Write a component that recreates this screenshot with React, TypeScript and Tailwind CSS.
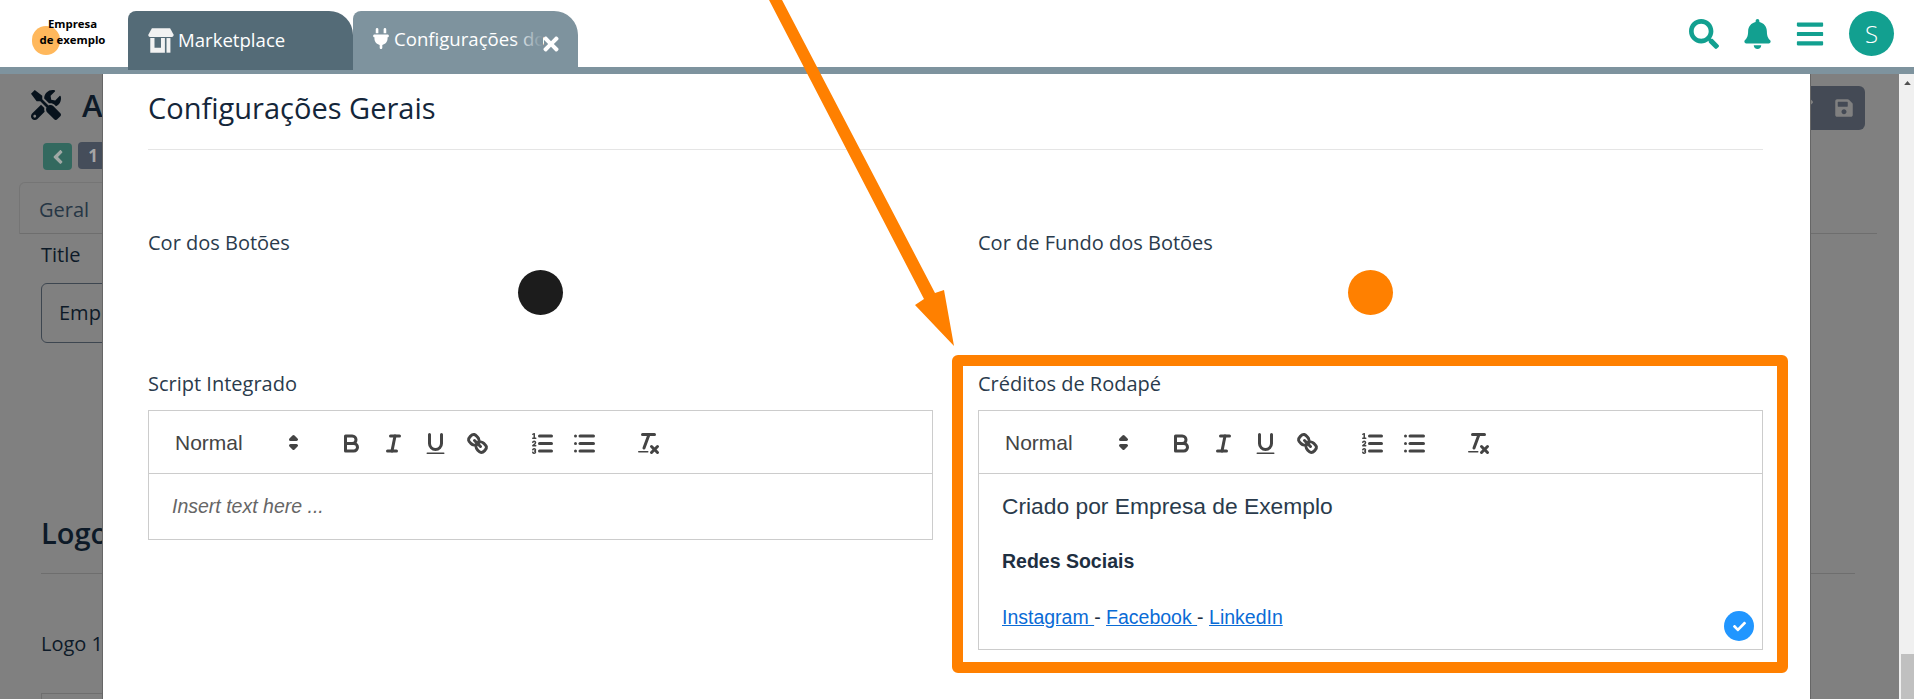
import React from "react";
import { FaAngleLeft, FaBars, FaBell, FaCheck, FaEdit, FaSave, FaSearch, FaTimes, FaTools } from "react-icons/fa";
import { FaPlug } from "react-icons/fa6";

const Stroke = ({ children }: { children: React.ReactNode }) => (
  <svg viewBox="0 0 18 18" className="w-[27px] h-[27px]" fill="none" stroke="#444" strokeWidth={2} strokeLinecap="round" strokeLinejoin="round">
    {children}
  </svg>
);

const ToolButton = ({ children }: { children: React.ReactNode }) => (
  <span className="flex items-center justify-center w-[42px] h-[36px]">{children}</span>
);

const Toolbar = () => (
  <div className="flex items-center h-[63px] px-[12px] pt-[2px] border-b border-[#ccc]">
    <div className="relative w-[147px] mr-[22.5px] pl-[14px] font-['Liberation_Sans',sans-serif] text-[21px] leading-[36px] text-[#444]">
      Normal
      <span className="absolute right-[1px] top-[4px]">
        <svg viewBox="0 0 18 18" className="w-[27px] h-[27px]" fill="#444" stroke="#444" strokeWidth={2} strokeLinejoin="round">
          <polygon points="7 11 9 13 11 11 7 11" />
          <polygon points="7 7 9 5 11 7 7 7" />
        </svg>
      </span>
    </div>
    <div className="flex mr-[22.5px]">
      <ToolButton>
        <Stroke>
          <path d="M5,4H9.5A2.5,2.5,0,0,1,12,6.5v0A2.5,2.5,0,0,1,9.5,9H5A0,0,0,0,1,5,9V4A0,0,0,0,1,5,4Z" />
          <path d="M5,9h5.5A2.5,2.5,0,0,1,13,11.5v0A2.5,2.5,0,0,1,10.5,14H5a0,0,0,0,1,0,0V9A0,0,0,0,1,5,9Z" />
        </Stroke>
      </ToolButton>
      <ToolButton>
        <Stroke>
          <line x1="7" x2="13" y1="4" y2="4" />
          <line x1="5" x2="11" y1="14" y2="14" />
          <line x1="8" x2="10" y1="14" y2="4" />
        </Stroke>
      </ToolButton>
      <ToolButton>
        <Stroke>
          <path d="M5,3V9a4.012,4.012,0,0,0,4,4H9a4.012,4.012,0,0,0,4-4V3" />
          <rect x="3" y="15" width="12" height="1" rx="0.5" ry="0.5" fill="#444" strokeWidth={0} />
        </Stroke>
      </ToolButton>
      <ToolButton>
        <Stroke>
          <line x1="7" x2="11" y1="7" y2="11" />
          <path d="M8.9,4.577a3.476,3.476,0,0,1,.36,4.679A3.476,3.476,0,0,1,4.577,8.9C3.185,7.5,2.035,6.4,4.217,4.217S7.5,3.185,8.9,4.577Z" />
          <path d="M13.423,9.1a3.476,3.476,0,0,0-4.679-.36,3.476,3.476,0,0,0,.36,4.679c1.392,1.392,2.5,2.542,4.679.36S14.815,10.5,13.423,9.1Z" />
        </Stroke>
      </ToolButton>
    </div>
    <div className="flex mr-[22.5px]">
      <ToolButton>
        <Stroke>
          <line x1="7" x2="15" y1="4" y2="4" />
          <line x1="7" x2="15" y1="9" y2="9" />
          <line x1="7" x2="15" y1="14" y2="14" />
          <line x1="2.5" x2="4.5" y1="5.5" y2="5.5" strokeWidth={1} />
          <path d="M3.5,6A0.5,0.5,0,0,1,3,5.5V3.085l-0.276.138A0.5,0.5,0,0,1,2.053,3c-0.124-.247-0.023-0.324.224-0.447l1-.5A0.5,0.5,0,0,1,4,2.5v3A0.5,0.5,0,0,1,3.5,6Z" fill="#444" strokeWidth={0} />
          <path d="M4.5,10.5h-2c0-.234,1.85-1.076,1.85-2.234A0.959,0.959,0,0,0,2.5,8.156" strokeWidth={1} />
          <path d="M2.5,14.846a0.959,0.959,0,0,0,1.85-.109A0.7,0.7,0,0,0,3.75,14a0.688,0.688,0,0,0,.6-0.736,0.959,0.959,0,0,0-1.85-.109" strokeWidth={1} />
        </Stroke>
      </ToolButton>
      <ToolButton>
        <Stroke>
          <line x1="6" x2="15" y1="4" y2="4" />
          <line x1="6" x2="15" y1="9" y2="9" />
          <line x1="6" x2="15" y1="14" y2="14" />
          <line x1="3" x2="3" y1="4" y2="4" />
          <line x1="3" x2="3" y1="9" y2="9" />
          <line x1="3" x2="3" y1="14" y2="14" />
        </Stroke>
      </ToolButton>
    </div>
    <ToolButton>
      <Stroke>
        <line x1="5" x2="13" y1="3" y2="3" />
        <line x1="6" x2="9.35" y1="12" y2="3" />
        <line x1="11" x2="15" y1="11" y2="15" />
        <line x1="15" x2="11" y1="11" y2="15" />
        <rect x="2" y="14" width="7" height="1" rx="0.5" ry="0.5" fill="#444" strokeWidth={0} />
      </Stroke>
    </ToolButton>
  </div>
);

// shop glyph of the first tab: awning, open window and door post
const ShopIcon = () => (
  <svg viewBox="0 0 80 75" className="w-[26px] h-[25px]" fill="#f2f2f2">
    <path d="M12 0H68L79 20Q79 27 70 27H10Q0 27 1 20Z" />
    <path d="M7 30H20V60H40V30H52V75H7Z" />
    <rect x="57" y="30" width="12" height="45" />
  </svg>
);

const Background = () => (
  <div className="text-[#0d1a28]">
    <div className="flex items-center justify-between h-[44px] mt-[12px] pl-[31px] pr-[34px]">
      <div className="flex items-center gap-[21px] mb-[6px]">
        <FaTools className="w-[30px] h-[30px] text-[#07121c]" />
        <span className="text-[31px] font-semibold leading-[40px]">Aplicativo</span>
      </div>
      <div className="flex items-center justify-end gap-[21px] w-[120px] h-[44px] pr-[11px] rounded-[6px] bg-[#444a55] text-[#808080]">
        <FaEdit className="w-[20px] h-[20px]" />
        <FaSave className="w-[20px] h-[20px]" />
      </div>
    </div>
    <div className="flex items-start gap-[6px] mt-[12px] ml-[43px]">
      <span className="flex items-center justify-center w-[29px] h-[27px] mt-[1px] rounded-[4px] bg-[#33695f]">
        <FaAngleLeft className="w-[22px] h-[22px] text-[#a0a8a5]" />
      </span>
      <span className="flex items-center justify-center w-[30px] h-[27px] rounded-[4px] bg-[#454d5a] text-[17px] font-bold text-[#a5a5a5]">
        1
      </span>
    </div>
    <div className="mt-[12px] ml-[19px] mr-[22px] h-[52px] border-b border-[#6e6e6e]">
      <span className="inline-block h-[52px] w-[100px] pl-[19px] pt-[12px] border border-b-0 border-[#757575] rounded-t-[6px] text-[20px] leading-[30px] text-[#263645]">
        Geral
      </span>
    </div>
    <div className="ml-[41px] mt-[6px] text-[20px] leading-[30px]">Title</div>
    <div className="ml-[41px] mt-[13px] w-[200px] h-[60px] pl-[17px] flex items-center border border-[#3d4650] rounded-[6px] text-[20px]">
      Empresa
    </div>
    <div className="ml-[41px] mt-[170px] text-[29px] font-semibold leading-[40px]">Logo</div>
    <div className="ml-[41px] mr-[44px] mt-[20px] border-b border-[#6e6e6e]" />
    <div className="ml-[41px] mt-[55px] text-[20px] leading-[30px]">Logo 1</div>
    <div className="ml-[41px] mt-[34px] w-[200px] h-[60px] border border-[#6e6e6e]" />
  </div>
);

const Modal = () => (
  <div className="absolute left-[102px] right-[88px] top-0 bottom-0 bg-white pl-[45px] pr-[47px] border-x border-[#666] overflow-hidden text-[#2a3b4c]">
    <div className="pt-[14px] pb-[21px] border-b border-[#e5e5e5]">
      <h2 className="text-[29px] font-medium leading-[40px] text-[#14263a]">Configurações Gerais</h2>
    </div>
    <div className="grid grid-cols-2 gap-x-[45px] gap-y-[54px] mt-[78px] text-[20px] leading-[30px]">
      <div>
        <div>Cor dos Botões</div>
        <div className="w-[45px] h-[45px] mt-[12px] mx-auto rounded-full bg-[#1c1c1c]" />
      </div>
      <div>
        <div>Cor de Fundo dos Botões</div>
        <div className="w-[45px] h-[45px] mt-[12px] mx-auto rounded-full bg-[#ff8000]" />
      </div>
      <div>
        <div className="mb-[11px]">Script Integrado</div>
        <div className="border border-[#ccc]">
          <Toolbar />
          <div className="h-[65px] pl-[23px] pt-[18px] font-['Liberation_Sans',sans-serif] italic text-[19.5px] leading-[28px] text-[#666]">
            Insert text here ...
          </div>
        </div>
      </div>
      <div>
        <div className="mb-[11px]">Créditos de Rodapé</div>
        <div className="relative border border-[#ccc] font-['Liberation_Sans',sans-serif]">
          <Toolbar />
          <div className="h-[175px] pl-[23px] pt-[18px]">
            <p className="text-[22.8px] leading-[28px]">Criado por Empresa de Exemplo</p>
            <p className="mt-[27px] text-[19.5px] font-bold leading-[28px] text-[#1e2f41]">Redes Sociais</p>
            <p className="mt-[28px] text-[19.5px] leading-[28px] text-[#1e2f41]">
              <a className="text-[#0a6bd6] underline">Instagram </a>-{" "}
              <a className="text-[#0a6bd6] underline">Facebook </a>-{" "}
              <a className="text-[#0a6bd6] underline">LinkedIn</a>
            </p>
          </div>
          <span className="absolute right-[8px] bottom-[8px] flex items-center justify-center w-[30px] h-[30px] rounded-full bg-[#2196ff]">
            <FaCheck className="w-[13px] h-[13px] text-white" />
          </span>
        </div>
      </div>
    </div>
    <div className="absolute left-[849px] top-[281px] w-[836px] h-[318px] border-[11px] border-[#ff8000] rounded-[6px]" />
  </div>
);

export default function App() {
  return (
    <div className="relative h-[699px] overflow-hidden font-['Open_Sans',sans-serif] bg-white">
      <header className="flex items-end h-[67px] bg-white">
        <div className="relative shrink-0 w-[128px] h-[67px] flex items-center pb-[3px] pl-[18px] text-center text-[11.4px] font-bold leading-[16px] text-black">
          <span className="absolute left-[32px] top-[26px] w-[28px] h-[29px] rounded-full bg-[#ffb85c]" />
          <span className="relative w-[109px]">
            Empresa
            <br />
            de exemplo
          </span>
        </div>
        <div className="relative z-10 flex items-center gap-[4px] w-[225px] h-[59px] -mb-[3px] pl-[20px] pb-[1px] rounded-tl-[8px] rounded-tr-[24px] bg-[#546b77] text-[18.6px] text-white">
          <ShopIcon />
          Marketplace
        </div>
        <div className="relative flex items-center gap-[5px] w-[225px] h-[56px] pl-[20px] pb-[1px] rounded-tl-[8px] rounded-tr-[24px] bg-[#7e939e] text-[18.6px] text-white">
          <FaPlug className="w-[16px] h-[21px]" />
          <span className="w-[150px] overflow-hidden whitespace-nowrap">Configurações do Sistema</span>
          <span className="absolute left-[160px] top-0 w-[30px] h-[56px] bg-gradient-to-r from-transparent to-[#7e939e]" />
          <FaTimes className="absolute left-[190px] top-[22px] w-[16px] h-[22px]" />
        </div>
        <div className="flex-1 flex items-center justify-end gap-[25px] h-[67px] pr-[20px] text-[#12a090]">
          <FaSearch className="w-[30px] h-[30px]" />
          <FaBell className="w-[27px] h-[30px]" />
          <FaBars className="w-[28px] h-[30px]" />
          <span className="flex items-center justify-center w-[45px] h-[45px] rounded-full bg-[#12a090] text-[24px] font-light text-white">
            S
          </span>
        </div>
      </header>
      <div className="h-[7px] bg-[#7e939e]" />
      <div className="flex h-[625px]">
        <main className="relative flex-1 bg-[#808080] overflow-hidden">
          <Background />
          <Modal />
        </main>
        <aside className="relative w-[15px] bg-[#f0f0f0]">
          <svg viewBox="0 0 10 6" className="absolute left-[5px] top-[7px] w-[7px] h-[4px]" fill="#505050">
            <polygon points="5,0 10,6 0,6" />
          </svg>
          <div className="absolute left-[2px] right-0 bottom-0 h-[45px] bg-[#c0c0c0]" />
        </aside>
      </div>
      <svg className="absolute left-0 top-0 w-[1914px] h-[699px] pointer-events-none" viewBox="0 0 1914 699" fill="#ff8000">
        <polygon points="768,-2 781,-2 935,293 944,290 954,346 915,305 924,299" />
      </svg>
    </div>
  );
}
